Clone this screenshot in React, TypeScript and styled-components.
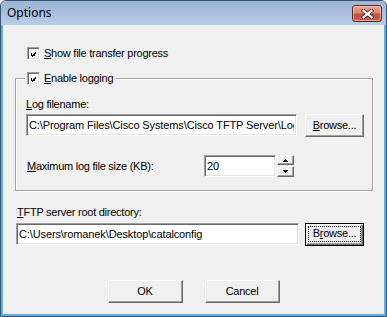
import React from "react";
import styled, { createGlobalStyle, css } from "styled-components";

const GlobalStyle = createGlobalStyle`
  html, body { margin: 0; padding: 0; background: #ffffff; }
  body { font-family: "Liberation Sans", Arial, sans-serif; }
  * { box-sizing: border-box; }
`;

const Window = styled.div`
  width: 387px;
  height: 317px;
  border: 1px solid #3b5371;
  border-radius: 6px 6px 0 0;
  background: #b9d1ea;
  display: flex;
  flex-direction: column;
  overflow: hidden;
`;

const TitleBar = styled.div`
  height: 24px;
  flex: none;
  display: flex;
  align-items: center;
  justify-content: space-between;
  padding: 0 4px 0 6px;
  background: linear-gradient(to bottom, #9db5d4 0%, #a9c1de 50%, #b8cfe9 100%);
`;

const Title = styled.span`
  font-family: "Noto Sans", "Open Sans", sans-serif;
  font-size: 12px;
  color: #000;
  line-height: 16px;
`;

const CloseButton = styled.div`
  width: 30px;
  height: 17px;
  margin-top: 1px;
  border: 1px solid #5b2a27;
  border-radius: 3px;
  background: linear-gradient(to bottom, #e6a696 0%, #d88774 45%, #c4503c 55%, #cc5f48 100%);
  box-shadow: inset 0 0 0 1px rgba(255, 220, 210, 0.55);
  display: flex;
  align-items: center;
  justify-content: center;
`;

const Client = styled.div`
  flex: 1;
  background: #f0f0f0;
  border: 2px solid #5eaee2;
  border-top: none;
  display: flex;
  flex-direction: column;
  padding: 22px 0 0 12px;
  font-size: 11px;
  letter-spacing: -0.25px;
  color: #000;
`;

const CheckRow = styled.label<{ $indent?: number }>`
  display: flex;
  align-items: center;
  gap: 4px;
  height: 13px;
  line-height: 13px;
  margin-left: ${(p) => p.$indent ?? 0}px;
`;

const Box = styled.span`
  width: 13px;
  height: 13px;
  flex: none;
  border: 1px solid;
  border-color: #a0a0a0 #ffffff #ffffff #a0a0a0;
  box-shadow: inset 1px 1px 0 #696969, inset -1px -1px 0 #e3e3e3;
  background: #ffffff;
  display: flex;
`;

const Group = styled.fieldset`
  margin: 12px 0 0 0;
  width: 358px;
  min-width: 0;
  border: 1px solid #a0a0a0;
  box-shadow: inset 1px 1px 0 #ffffff, 1px 1px 0 #ffffff;
  padding: 13px 8px 13px 10px;
  display: flex;
  flex-direction: column;
`;

const Legend = styled.legend`
  margin-left: -1px;
  padding: 0 3px 0 2px;
  background: #f0f0f0;
`;

const Label = styled.div<{ $indent?: number }>`
  height: 13px;
  line-height: 13px;
  margin-left: ${(p) => p.$indent ?? 0}px;
  white-space: nowrap;
`;

const FieldRow = styled.div<{ $top: number; $gap: number; $indent?: number }>`
  display: flex;
  align-items: flex-start;
  gap: ${(p) => p.$gap}px;
  margin-top: ${(p) => p.$top}px;
  margin-left: ${(p) => p.$indent ?? 0}px;
`;

const TextField = styled.input<{ $width: number }>`
  width: ${(p) => p.$width}px;
  height: 22px;
  flex: none;
  margin: 0;
  padding: 0 2px 1px 2px;
  border: 1px solid;
  border-color: #a0a0a0 #ffffff #ffffff #a0a0a0;
  box-shadow: inset 1px 1px 0 #696969, inset -1px -1px 0 #e3e3e3;
  background: #ffffff;
  font-family: "Liberation Sans", Arial, sans-serif;
  font-size: 11px;
  letter-spacing: -0.12px;
  color: #000;
  outline: none;
`;

const raised = css`
  border: 1px solid;
  border-color: #ffffff #696969 #696969 #ffffff;
  box-shadow: inset -1px -1px 0 #a0a0a0;
`;

const Button = styled.div<{ $width: number; $default?: boolean }>`
  width: ${(p) => p.$width}px;
  height: 23px;
  flex: none;
  background: #f0f0f0;
  display: flex;
  align-items: stretch;
  justify-content: center;
  ${(p) =>
    p.$default
      ? css`
          border: 1px solid #000;
          box-shadow: inset 1px 1px 0 #ffffff, inset -1px -1px 0 #696969,
            inset -2px -2px 0 #a0a0a0;
          padding: 2px 2px 3px 2px;
        `
      : raised}
`;

const ButtonText = styled.span<{ $focus?: boolean }>`
  flex: 1;
  display: flex;
  align-items: center;
  justify-content: center;
  line-height: 13px;
  padding-bottom: 1px;
  border: 1px dotted ${(p) => (p.$focus ? "#000" : "transparent")};
`;

const SpinRow = styled.div`
  display: flex;
  align-items: center;
  margin-top: 18px;
`;

const SpinLabel = styled.div`
  width: 178px;
  flex: none;
  line-height: 13px;
  padding-left: 1px;
`;

const Spin = styled.div`
  display: flex;
  flex-direction: column;
  gap: 1px;
  margin-left: 1px;
`;

const SpinButton = styled.div<{ $h: number }>`
  width: 17px;
  height: ${(p) => p.$h}px;
  background: #f0f0f0;
  ${raised}
  display: flex;
  align-items: center;
  justify-content: center;
`;

const Buttons = styled.div`
  display: flex;
  justify-content: center;
  gap: 22px;
  margin: 34px 0 0 -12px;
`;

const Check = () => (
  <svg width="9" height="9" viewBox="0 0 9 9" shapeRendering="crispEdges" style={{ margin: 2 }}>
    {[
      [1, 3],
      [2, 4],
      [3, 5],
      [4, 4],
      [5, 3],
      [6, 2],
      [7, 1],
    ].map(([x, y]) => (
      <rect key={x} x={x} y={y} width="1" height="3" fill="#000" />
    ))}
  </svg>
);

const Arrow = ({ up }: { up?: boolean }) => (
  <svg width="5" height="3" viewBox="0 0 5 3" shapeRendering="crispEdges">
    {up ? (
      <>
        <rect x="2" y="0" width="1" height="1" fill="#000" />
        <rect x="1" y="1" width="3" height="1" fill="#000" />
        <rect x="0" y="2" width="5" height="1" fill="#000" />
      </>
    ) : (
      <>
        <rect x="0" y="0" width="5" height="1" fill="#000" />
        <rect x="1" y="1" width="3" height="1" fill="#000" />
        <rect x="2" y="2" width="1" height="1" fill="#000" />
      </>
    )}
  </svg>
);

export default function App() {
  return (
    <>
      <GlobalStyle />
      <Window>
        <TitleBar>
          <Title>Options</Title>
          <CloseButton>
            <svg width="13" height="10" viewBox="0 0 13 10">
              <path d="M2.5 1.8 L10.5 8.2 M10.5 1.8 L2.5 8.2" stroke="#3a2a2a" strokeWidth="4" strokeLinecap="square" />
              <path d="M2.5 1.8 L10.5 8.2 M10.5 1.8 L2.5 8.2" stroke="#ffffff" strokeWidth="2.2" strokeLinecap="square" />
            </svg>
          </CloseButton>
        </TitleBar>
        <Client>
          <CheckRow $indent={12}>
            <Box>
              <Check />
            </Box>
            <span>
              <u>S</u>how file transfer progress
            </span>
          </CheckRow>

          <Group>
            <Legend>
              <CheckRow>
                <Box>
                  <Check />
                </Box>
                <span>
                  <u>E</u>nable logging
                </span>
              </CheckRow>
            </Legend>
            <Label>
              <u>L</u>og filename:
            </Label>
            <FieldRow $top={3} $gap={8}>
              <TextField $width={271} readOnly value="C:\Program Files\Cisco Systems\Cisco TFTP Server\Log" />
              <Button $width={59}>
                <ButtonText>
                  <u>B</u>rowse...
                </ButtonText>
              </Button>
            </FieldRow>
            <SpinRow>
              <SpinLabel>
                <u>M</u>aximum log file size (KB):
              </SpinLabel>
              <TextField $width={72} readOnly value="20" />
              <Spin>
                <SpinButton $h={10}>
                  <Arrow up />
                </SpinButton>
                <SpinButton $h={11}>
                  <Arrow />
                </SpinButton>
              </Spin>
            </SpinRow>
          </Group>

          <Label $indent={2} style={{ marginTop: 15 }}>
            <u>T</u>FTP server root directory:
          </Label>
          <FieldRow $top={4} $gap={6} $indent={1}>
            <TextField $width={283} readOnly value="C:\Users\romanek\Desktop\catalconfig" />
            <Button $width={59} $default>
              <ButtonText $focus>
                B<u>r</u>owse...
              </ButtonText>
            </Button>
          </FieldRow>

          <Buttons>
            <Button $width={75}>
              <ButtonText>OK</ButtonText>
            </Button>
            <Button $width={75}>
              <ButtonText>Cancel</ButtonText>
            </Button>
          </Buttons>
        </Client>
      </Window>
    </>
  );
}
